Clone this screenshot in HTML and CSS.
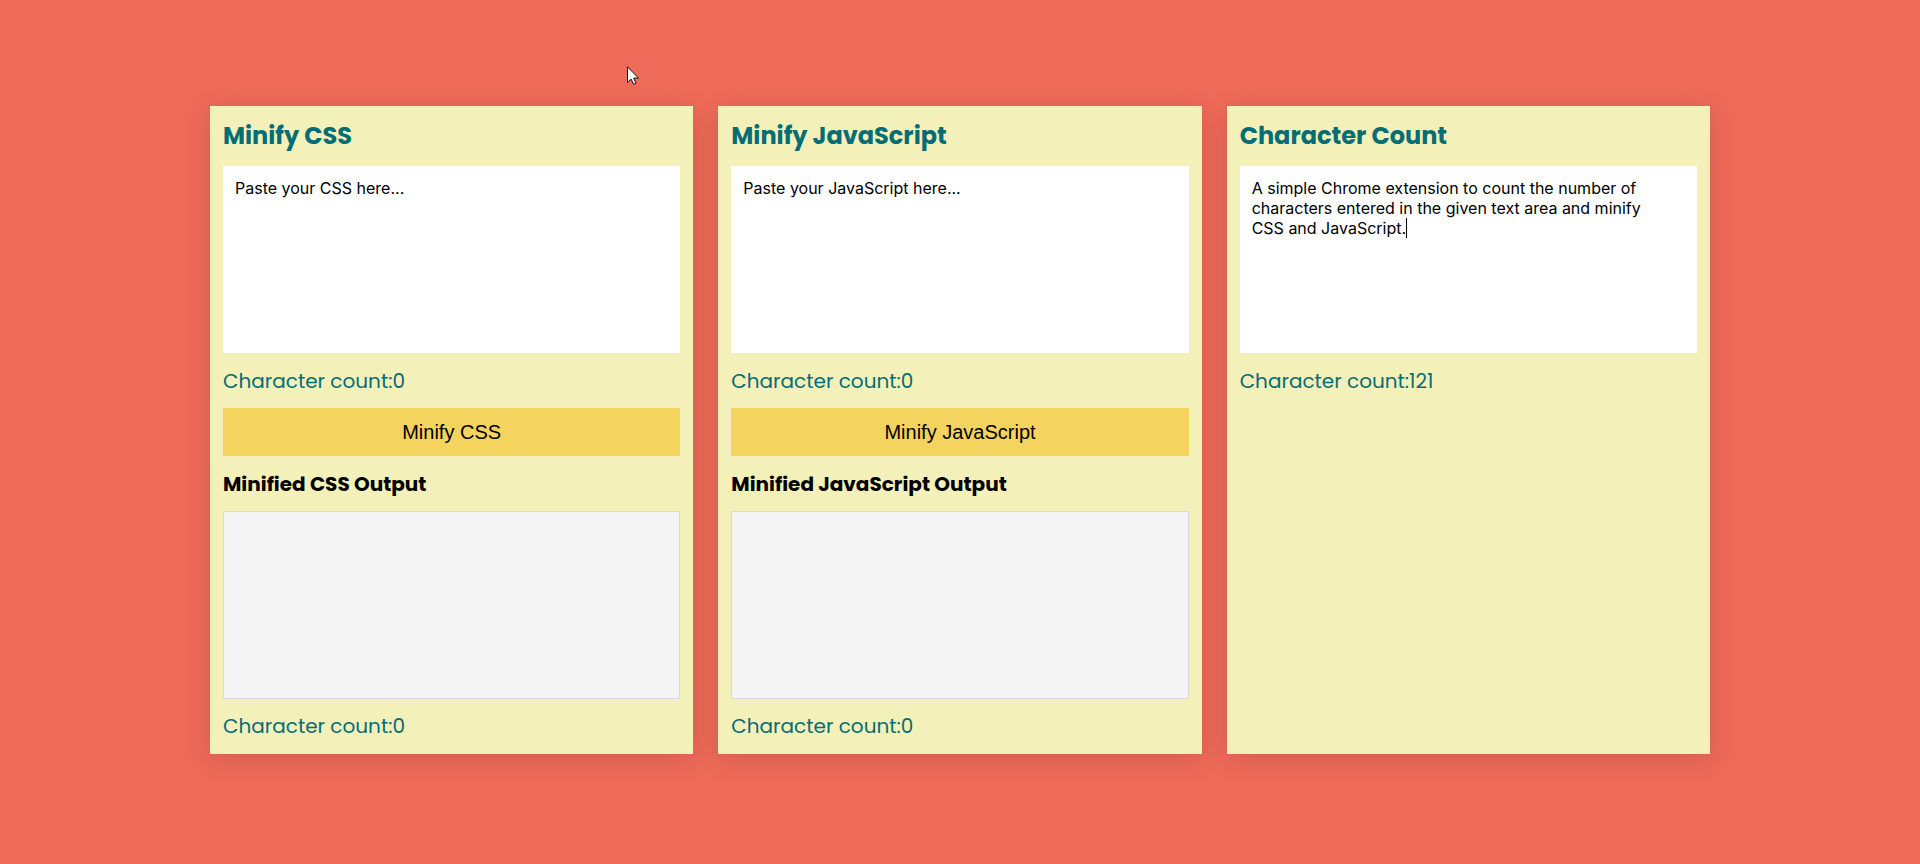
FILE: index.html
```html
<!DOCTYPE html>
<html lang="en">
<head>
<meta charset="utf-8">
<meta name="viewport" content="width=device-width, initial-scale=1">
<title>Minify CSS and JavaScript</title>
<link rel="stylesheet" href="styles.css">
</head>
<body>
<main class="container">
  <section class="panel">
    <h2 class="title"><label for="css-input">Minify CSS</label></h2>
    <textarea class="field" id="css-input" placeholder="Paste your CSS here..."></textarea>
    <p class="count">Character count:<span>0</span></p>
    <button class="action" type="button">Minify CSS</button>
    <h3 class="subtitle"><label for="css-output">Minified CSS Output</label></h3>
    <textarea class="field output" id="css-output" readonly></textarea>
    <p class="count">Character count:<span>0</span></p>
  </section>
  <section class="panel">
    <h2 class="title"><label for="js-input">Minify JavaScript</label></h2>
    <textarea class="field" id="js-input" placeholder="Paste your JavaScript here..."></textarea>
    <p class="count">Character count:<span>0</span></p>
    <button class="action" type="button">Minify JavaScript</button>
    <h3 class="subtitle"><label for="js-output">Minified JavaScript Output</label></h3>
    <textarea class="field output" id="js-output" readonly></textarea>
    <p class="count">Character count:<span>0</span></p>
  </section>
  <section class="panel">
    <h2 class="title"><label for="text-input">Character Count</label></h2>
    <div class="editor">
      <textarea class="field" id="text-input" spellcheck="false">A simple Chrome extension to count the number of characters entered in the given text area and minify CSS and JavaScript.</textarea>
      <span class="caret"></span>
    </div>
    <p class="count">Character count:<span>121</span></p>
  </section>
</main>
<svg class="pointer" width="12" height="19" viewBox="0 0 12 19" aria-hidden="true"><path d="M.5.8v15.7l3.6-3.4 2.4 5.2 2.5-1.1-2.3-5.1h4.8z" fill="#fff" stroke="#111" stroke-width="1"/></svg>
</body>
</html>
```
FILE: styles.css
```css
* {
  box-sizing: border-box;
}

body {
  display: flex;
  align-items: center;
  justify-content: center;
  min-height: 100vh;
  margin: 0;
  padding: 0 24px 4px;
  background: #ee6a59;
  color: #000;
  font-family: Poppins, Inter, sans-serif;
}

.container {
  display: grid;
  grid-template-columns: repeat(auto-fit, minmax(320px, 1fr));
  gap: 25px;
  width: 100%;
  max-width: 1500px;
}

.panel {
  display: flex;
  flex-direction: column;
  padding: 12px 13px 13px;
  background: #f4f0b9;
  box-shadow: 0 5px 25px rgba(0, 0, 0, 0.12);
}

.title {
  margin: 0 0 12px;
  color: #056d75;
  font-size: 24px;
  font-weight: 700;
  line-height: 36px;
}

.field {
  display: block;
  width: 100%;
  height: 187px;
  padding: 12px 32px 12px 12px;
  border: 0;
  outline: 0;
  resize: none;
  background: #fff;
  color: #000;
  font-family: Inter, sans-serif;
  font-size: 16px;
  font-weight: 400;
  line-height: 20px;
}

.field::placeholder {
  color: #000;
  opacity: 1;
}

.output {
  height: 188px;
  border: 1px solid #d9d9d9;
  background: #f4f4f4;
}

.count {
  margin: 13px 0 12px;
  color: #056d75;
  font-size: 20px;
  line-height: 30px;
}

.output + .count {
  margin: 12px 0 0;
}

.action {
  height: 48px;
  padding: 0 12px;
  border: 0;
  background: #f4d35e;
  color: #000;
  font-family: "Liberation Sans", Arial, sans-serif;
  font-size: 20px;
}

.subtitle {
  margin: 13px 0 12px;
  font-size: 20px;
  font-weight: 700;
  line-height: 30px;
}

.editor {
  position: relative;
}

.caret {
  position: absolute;
  top: 52px;
  left: 166px;
  width: 1px;
  height: 20px;
  background: #000;
}

.pointer {
  position: absolute;
  top: 66px;
  left: 627px;
}
```
